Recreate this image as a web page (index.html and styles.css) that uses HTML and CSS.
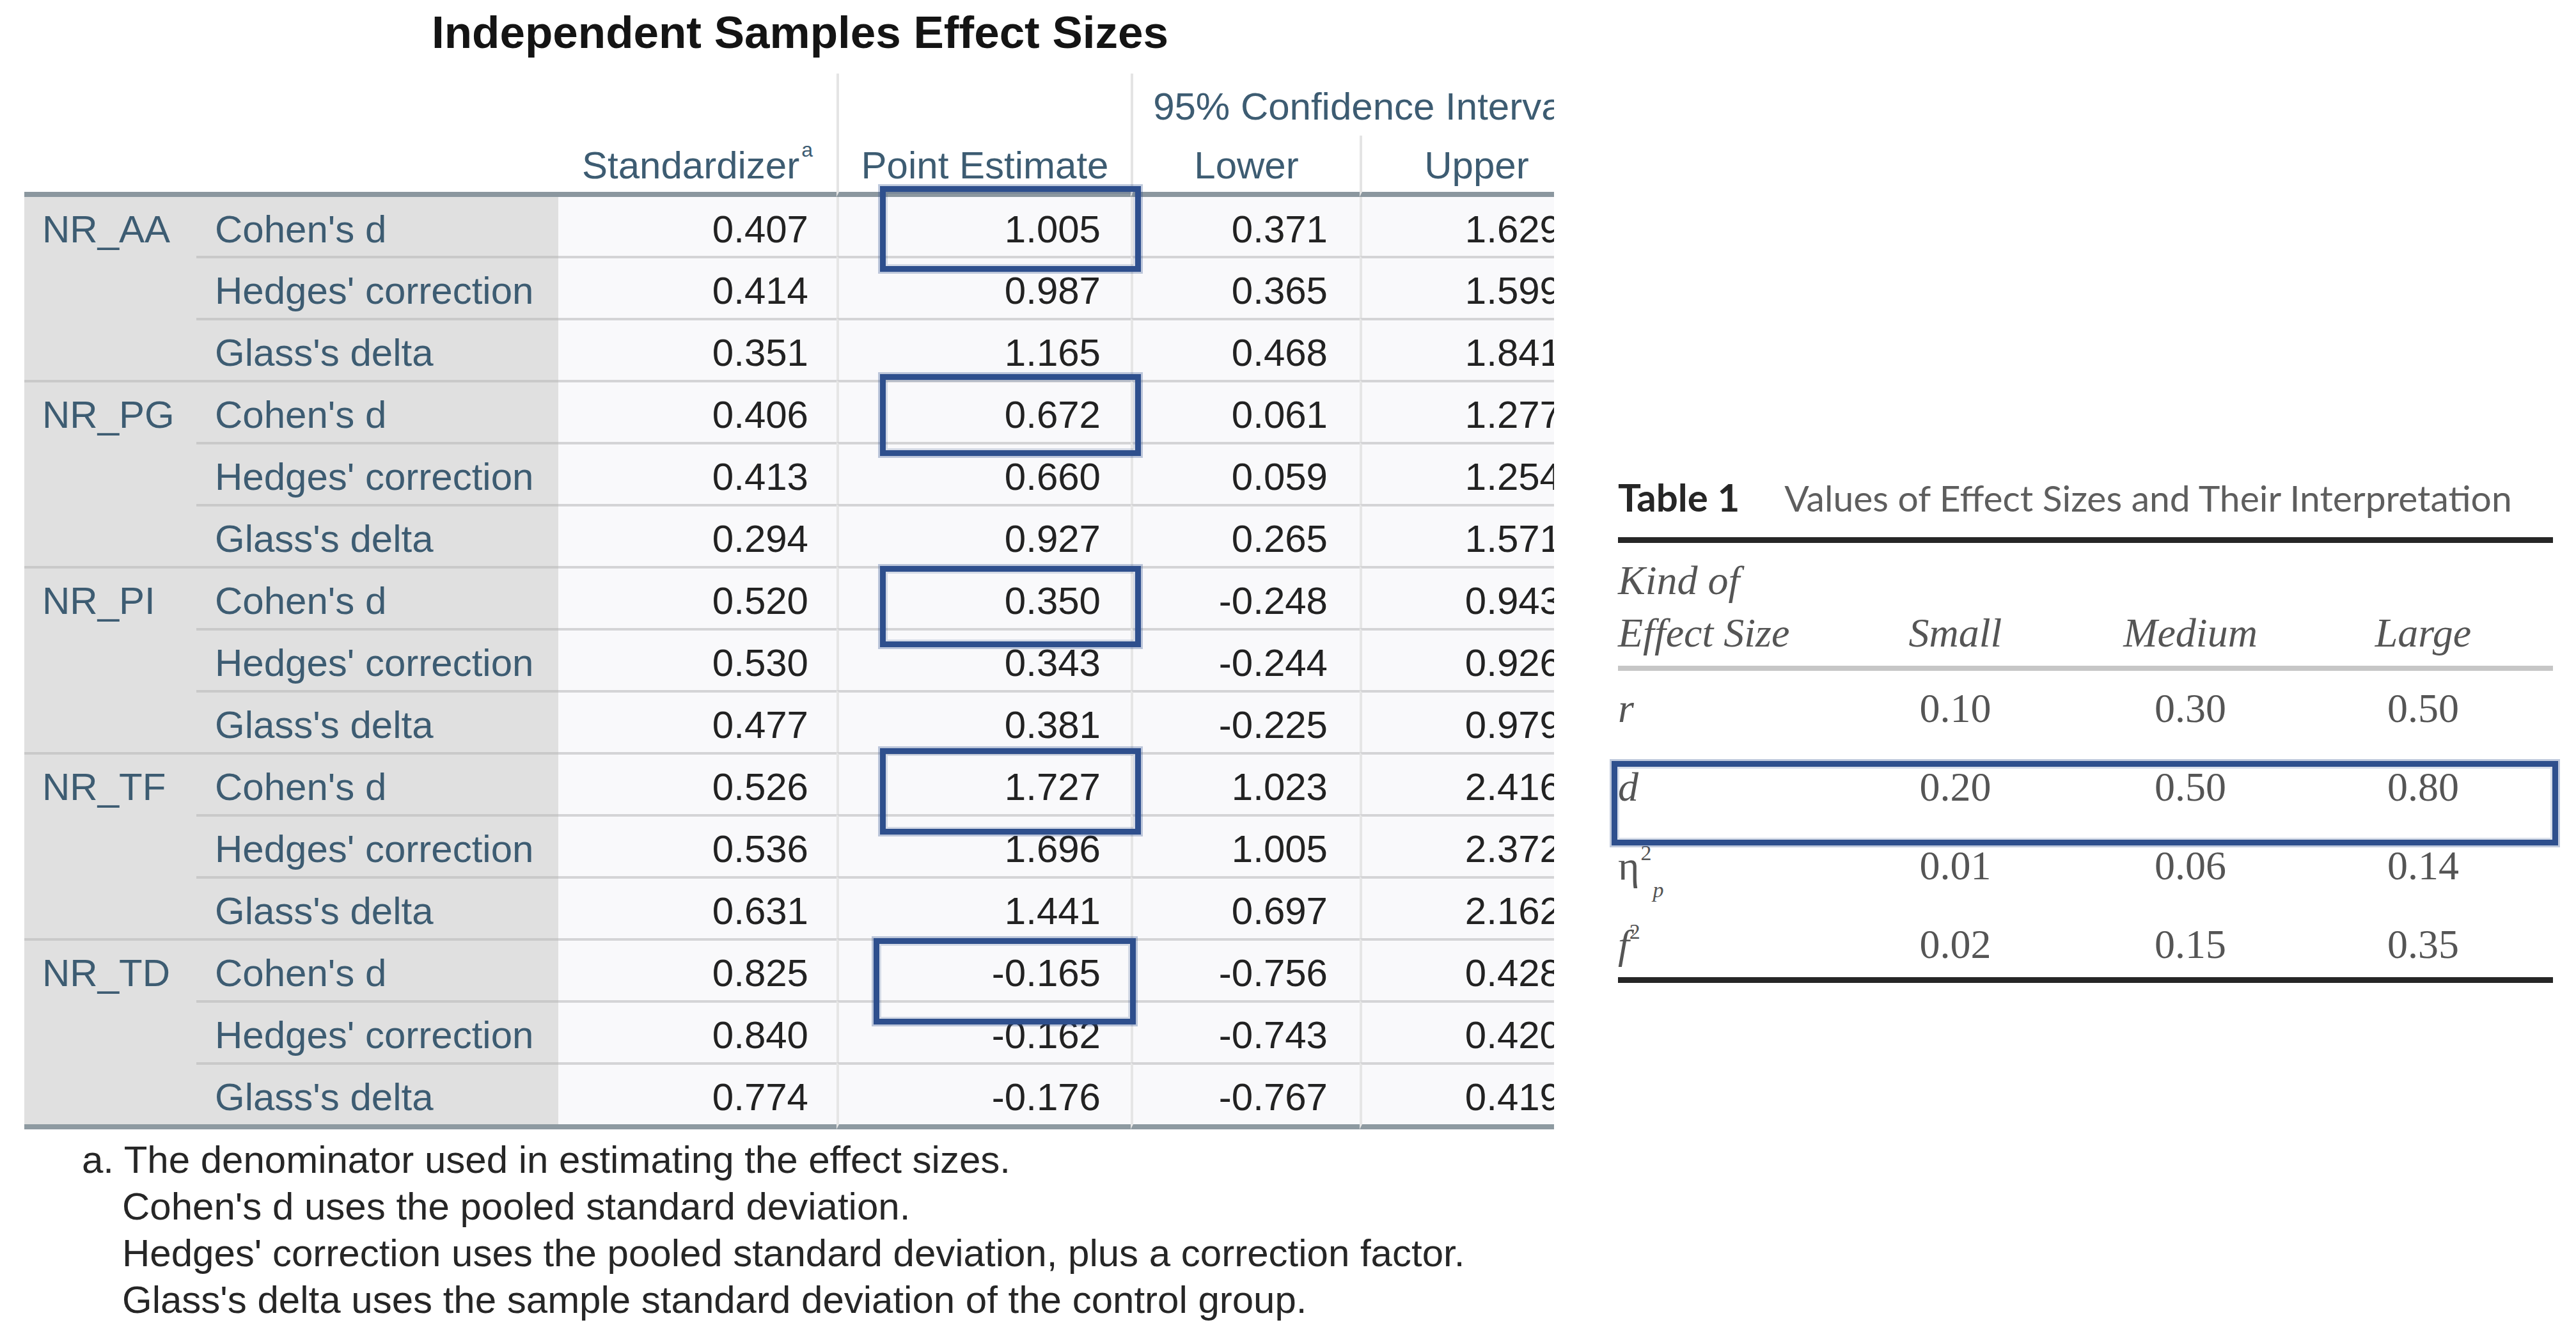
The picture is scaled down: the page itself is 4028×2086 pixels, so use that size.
FILE: index.html
```html
<!DOCTYPE html>
<html lang="en">
<head>
<meta charset="utf-8">
<title>Independent Samples Effect Sizes</title>
<link rel="stylesheet" href="styles.css">
</head>
<body>
<main class="page">
  <section class="spss">
    <div class="spss-inner">
      <h1 class="spss-title">Independent Samples Effect Sizes</h1>
      <div class="es">
        <div class="hd hd-corner"></div>
        <div class="hd hd-std"><span>Standardizer<sup>a</sup></span></div>
        <div class="hd hd-pt"><span>Point Estimate</span></div>
        <div class="hd hd-ci"><span>95% Confidence Interval</span></div>
        <div class="hd hd-lo"><span>Lower</span></div>
        <div class="hd hd-up"><span>Upper</span></div>

        <div class="grp">NR_AA</div>
        <div class="lbl">Cohen's d</div>
        <div class="v std">0.407</div><div class="v pt">1.005</div><div class="v lo">0.371</div><div class="v up">1.629</div>
        <div class="lbl sep">Hedges' correction</div>
        <div class="v std sep">0.414</div><div class="v pt sep">0.987</div><div class="v lo sep">0.365</div><div class="v up sep">1.599</div>
        <div class="lbl sep">Glass's delta</div>
        <div class="v std sep">0.351</div><div class="v pt sep">1.165</div><div class="v lo sep">0.468</div><div class="v up sep">1.841</div>

        <div class="grp sep">NR_PG</div>
        <div class="lbl sep">Cohen's d</div>
        <div class="v std sep">0.406</div><div class="v pt sep">0.672</div><div class="v lo sep">0.061</div><div class="v up sep">1.277</div>
        <div class="lbl sep">Hedges' correction</div>
        <div class="v std sep">0.413</div><div class="v pt sep">0.660</div><div class="v lo sep">0.059</div><div class="v up sep">1.254</div>
        <div class="lbl sep">Glass's delta</div>
        <div class="v std sep">0.294</div><div class="v pt sep">0.927</div><div class="v lo sep">0.265</div><div class="v up sep">1.571</div>

        <div class="grp sep">NR_PI</div>
        <div class="lbl sep">Cohen's d</div>
        <div class="v std sep">0.520</div><div class="v pt sep">0.350</div><div class="v lo sep">-0.248</div><div class="v up sep">0.943</div>
        <div class="lbl sep">Hedges' correction</div>
        <div class="v std sep">0.530</div><div class="v pt sep">0.343</div><div class="v lo sep">-0.244</div><div class="v up sep">0.926</div>
        <div class="lbl sep">Glass's delta</div>
        <div class="v std sep">0.477</div><div class="v pt sep">0.381</div><div class="v lo sep">-0.225</div><div class="v up sep">0.979</div>

        <div class="grp sep">NR_TF</div>
        <div class="lbl sep">Cohen's d</div>
        <div class="v std sep">0.526</div><div class="v pt sep">1.727</div><div class="v lo sep">1.023</div><div class="v up sep">2.416</div>
        <div class="lbl sep">Hedges' correction</div>
        <div class="v std sep">0.536</div><div class="v pt sep">1.696</div><div class="v lo sep">1.005</div><div class="v up sep">2.372</div>
        <div class="lbl sep">Glass's delta</div>
        <div class="v std sep">0.631</div><div class="v pt sep">1.441</div><div class="v lo sep">0.697</div><div class="v up sep">2.162</div>

        <div class="grp sep last">NR_TD</div>
        <div class="lbl sep">Cohen's d</div>
        <div class="v std sep">0.825</div><div class="v pt sep">-0.165</div><div class="v lo sep">-0.756</div><div class="v up sep">0.428</div>
        <div class="lbl sep">Hedges' correction</div>
        <div class="v std sep">0.840</div><div class="v pt sep">-0.162</div><div class="v lo sep">-0.743</div><div class="v up sep">0.420</div>
        <div class="lbl sep last">Glass's delta</div>
        <div class="v std sep last">0.774</div><div class="v pt sep last">-0.176</div><div class="v lo sep last">-0.767</div><div class="v up sep last">0.419</div>
      </div>

      <div class="mark mark-1"></div>
      <div class="mark mark-2"></div>
      <div class="mark mark-3"></div>
      <div class="mark mark-4"></div>
      <div class="mark mark-5"></div>

      <div class="note">
        <p class="first">a. The denominator used in estimating the effect sizes.</p>
        <p>Cohen's d uses the pooled standard deviation.</p>
        <p>Hedges' correction uses the pooled standard deviation, plus a correction factor.</p>
        <p>Glass's delta uses the sample standard deviation of the control group.</p>
      </div>
    </div>
  </section>

  <section class="apa">
    <div class="apa-cap"><b>Table 1</b><span class="apa-cap-text">Values of Effect Sizes and Their Interpretation</span></div>
    <div class="apa-table">
      <div class="ah ah-kind"><i>Kind of</i><br><i>Effect Size</i></div>
      <div class="ah ah-col"><i>Small</i></div>
      <div class="ah ah-col"><i>Medium</i></div>
      <div class="ah ah-col"><i>Large</i></div>
      <div class="ah-fill"></div>
      <div class="apa-rule"></div>

      <div class="ak"><i>r</i></div>
      <div class="av">0.10</div><div class="av">0.30</div><div class="av">0.50</div><div class="ae"></div>

      <div class="ak"><i>d</i></div>
      <div class="av">0.20</div><div class="av">0.50</div><div class="av">0.80</div><div class="ae"></div>

      <div class="ak"><span class="eta">η</span><sup class="sup2">2</sup><sub class="subp"><i>p</i></sub></div>
      <div class="av">0.01</div><div class="av">0.06</div><div class="av">0.14</div><div class="ae"></div>

      <div class="ak"><i>f</i><sup class="sup2 supf">2</sup></div>
      <div class="av">0.02</div><div class="av">0.15</div><div class="av">0.35</div><div class="ae"></div>
    </div>
    <div class="mark mark-apa"></div>
  </section>
</main>
</body>
</html>
```

FILE: styles.css
```css
* { box-sizing: border-box; }

html, body {
  margin: 0;
  padding: 0;
  background: #ffffff;
}

body {
  width: 4028px;
  height: 2086px;
  overflow: hidden;
  font-family: "Liberation Sans", Arial, sans-serif;
}

.page {
  display: flex;
  align-items: flex-start;
}

/* ---------- SPSS style table ---------- */
.spss {
  flex: 0 0 2392px;
  width: 2392px;
  margin-left: 38px;
  overflow: hidden;
}

.spss-inner {
  position: relative;
  width: 2450px;
}

.spss-title {
  margin: 0 0 16px 0;
  padding: 3px 24px 0 0;
  height: 99px;
  line-height: 96px;
  font-size: 71px;
  font-weight: 700;
  text-align: center;
  color: #141414;
  white-space: nowrap;
}

.es {
  display: grid;
  grid-template-columns: 269px 566px 435px 460px 358px 362px;
  grid-template-rows: 97px 96px 92px repeat(13, 97px) 105px;
  font-size: 60px;
  line-height: 70px;
  white-space: nowrap;
}

.hd {
  display: flex;
  align-items: flex-end;
  justify-content: center;
  padding-bottom: 6px;
  color: #3d5c72;
  background: #ffffff;
}

.hd sup {
  font-size: 32px;
  line-height: 0;
  vertical-align: baseline;
  position: relative;
  top: -34px;
  margin-left: 3px;
}

.hd-corner { grid-column: 1 / 3; grid-row: 1 / 3; border-bottom: 8px solid #8b979f; }
.hd-std { grid-column: 3; grid-row: 1 / 3; border-bottom: 8px solid #8b979f; }
.hd-pt { grid-column: 4; grid-row: 1 / 3; border-left: 4px solid #e4e4e4; border-bottom: 8px solid #8b979f; }
.hd-ci { grid-column: 5 / 7; grid-row: 1; border-left: 4px solid #e4e4e4; padding-bottom: 10px; }
.hd-lo { grid-column: 5; grid-row: 2; border-left: 4px solid #e4e4e4; border-bottom: 8px solid #8b979f; }
.hd-up { grid-column: 6; grid-row: 2; border-left: 4px solid #e4e4e4; border-bottom: 8px solid #8b979f; }

.grp {
  grid-row: span 3;
  grid-column: 1;
  background: #e0e0e0;
  color: #3d5c72;
  padding: 16px 0 0 28px;
}

.lbl {
  grid-column: 2;
  background: #e0e0e0;
  color: #3d5c72;
  padding: 16px 0 0 29px;
}

.v {
  background: #f9f9fb;
  color: #222222;
  text-align: right;
  padding-top: 16px;
}

.v.std { padding-right: 44px; }
.v.pt { padding-right: 47px; border-left: 4px solid #e6e6e6; }
.v.lo { padding-right: 50px; border-left: 4px solid #e6e6e6; }
.v.up { padding-right: 47px; border-left: 4px solid #e6e6e6; }

.grp.sep, .lbl.sep { border-top: 4px solid #c9c9c9; }
.v.sep { border-top: 4px solid #d4d4d6; }
.last { border-bottom: 8px solid #8e9aa1; }

/* highlight boxes */
.mark {
  position: absolute;
  border: 9px solid #2e4f8d;
  box-shadow: 0 0 0 3px rgba(46, 79, 141, 0.3), inset 0 0 0 3px rgba(46, 79, 141, 0.18);
  pointer-events: none;
}

.mark-1 { left: 1338px; top: 291px; width: 408px; height: 134px; }
.mark-2 { left: 1338px; top: 585px; width: 408px; height: 128px; }
.mark-3 { left: 1338px; top: 885px; width: 408px; height: 127px; }
.mark-4 { left: 1338px; top: 1170px; width: 408px; height: 135px; }
.mark-5 { left: 1328px; top: 1467px; width: 410px; height: 135px; }

/* footnote */
.note {
  margin-top: 11px;
  font-size: 60px;
  line-height: 73px;
  color: #262626;
  white-space: nowrap;
}

.note p { margin: 0 0 0 153px; }
.note p.first { margin-left: 90px; }

/* ---------- APA style table ---------- */
.apa {
  position: relative;
  flex: 0 0 1462px;
  width: 1462px;
  margin-left: 100px;
  margin-top: 741px;
}

.apa-cap {
  height: 99px;
  font-family: Lato, "Liberation Sans", sans-serif;
  font-size: 60px;
  line-height: 72px;
  color: #5e5e5e;
  white-space: nowrap;
}

.apa-cap b {
  font-weight: 700;
  color: #262626;
  margin-right: 70px;
}

.apa-cap-text {
  font-size: 57px;
}

.apa-table {
  display: grid;
  grid-template-columns: 345px 365px 370px 358px 24px;
  grid-template-rows: 192px 8px 123px 123px 123px 110px;
  border-top: 9px solid #262626;
  border-bottom: 9px solid #262626;
  font-family: "Liberation Serif", "Times New Roman", serif;
  font-size: 64px;
  line-height: 82px;
  color: #555555;
  white-space: nowrap;
}

.ah-kind { padding-top: 18px; }

.ah-col {
  display: flex;
  align-items: flex-end;
  justify-content: center;
  padding-bottom: 10px;
}

.apa-rule {
  grid-column: 1 / -1;
  background: #c6c6c6;
}

.ak { padding-top: 18px; }

.av {
  padding-top: 18px;
  text-align: center;
}

.eta { font-style: normal; }

.sup2 {
  font-size: 34px;
  line-height: 0;
  position: relative;
  top: -8px;
  margin-left: 2px;
}

.supf { margin-left: 0; }

.subp {
  font-size: 34px;
  line-height: 0;
  position: relative;
  top: 14px;
  margin-left: 2px;
}

.mark-apa { left: -10px; top: 449px; width: 1480px; height: 132px; }
```
